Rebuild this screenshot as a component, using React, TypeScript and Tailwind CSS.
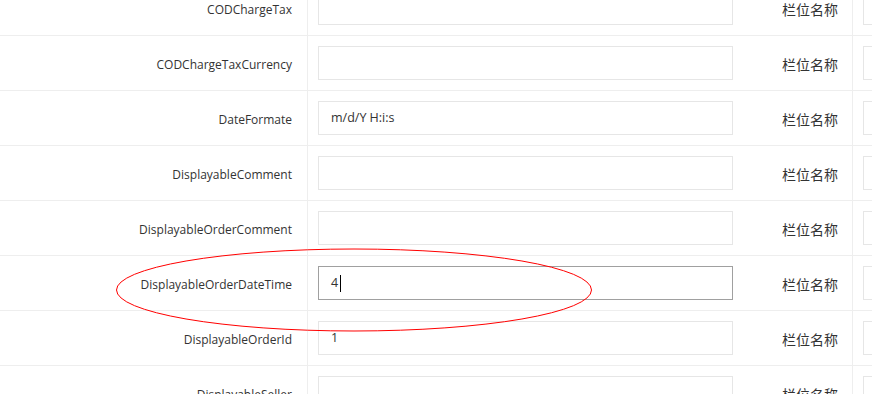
const rows = [
  { name: "CODChargeTax", value: "" },
  { name: "CODChargeTaxCurrency", value: "" },
  { name: "DateFormate", value: "m/d/Y H:i:s" },
  { name: "DisplayableComment", value: "" },
  { name: "DisplayableOrderComment", value: "" },
  { name: "DisplayableOrderDateTime", value: "4", focused: true },
  { name: "DisplayableOrderId", value: "1" },
  { name: "DisplayableSeller", value: "" },
];

const App = () => {
  return (
    <div
      className="relative w-[872px] h-[394px] overflow-hidden bg-white text-[12.5px] text-[#333]"
      style={{ fontFamily: '"Open Sans", "Noto Sans CJK SC", sans-serif' }}
    >
      <div className="mt-[-19px]">
        {rows.map((row) => (
          <div
            key={row.name}
            className="grid grid-cols-[308px_435px_110px_1fr] border-b border-[#eee]"
          >
            <div className="flex items-center justify-end pr-[15px] pt-[3px] text-[12px] border-r border-[#eee]">
              {row.name}
            </div>
            <div className="py-[10px] pl-[10px] pr-[10px]">
              <div
                className={
                  row.focused
                    ? "h-[34px] w-[415px] border border-[#a0a0a0] flex items-center pl-[12px] pt-[1px]"
                    : "h-[34px] w-[415px] border border-[#e6e6e6] flex items-center pl-[12px] pt-[1px]"
                }
              >
                <span>{row.value}</span>
                {row.focused && (
                  <span className="ml-[2px] w-px h-[17px] bg-black" />
                )}
              </div>
            </div>
            <div className="flex items-center justify-end pr-[14px] pt-[2px] text-[14px] border-r border-[#eee]">
              栏位名称
            </div>
            <div className="py-[10px] pl-[10px]">
              <div className="h-[34px] w-[300px] border border-[#e6e6e6]" />
            </div>
          </div>
        ))}
      </div>

      {/* annotation circle */}
      <svg
        className="absolute left-[115px] top-[248px]"
        width="478"
        height="85"
        viewBox="0 0 478 85"
      >
        <ellipse
          cx="239"
          cy="42"
          rx="237.5"
          ry="41"
          fill="none"
          stroke="#ff0000"
          strokeWidth="1"
        />
      </svg>
    </div>
  );
};

export default App;
